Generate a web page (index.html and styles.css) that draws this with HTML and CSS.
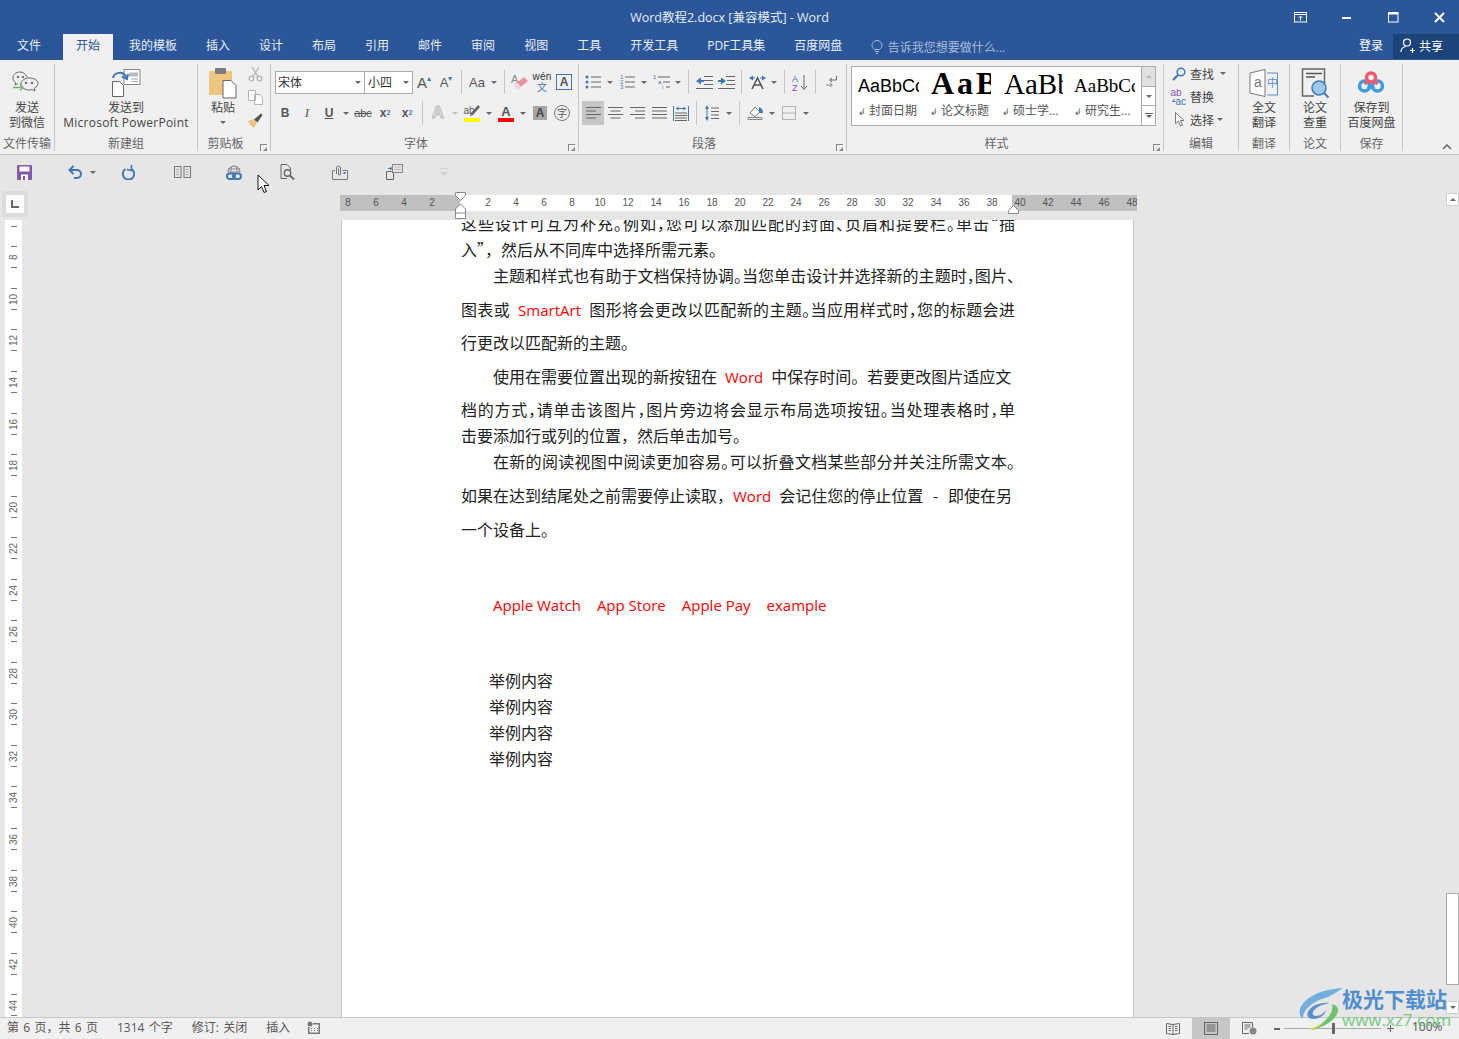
FILE: index.html
```html
<!DOCTYPE html>
<html lang="zh-CN">
<head>
    <meta charset="UTF-8">
    <title>Word教程2.docx [兼容模式] - Word</title>
    <link rel="stylesheet" href="styles.css">
</head>
<body>

    <!-- Title bar -->
    <header class="titlebar">
        <div></div>
        <div class="doc-title">Word教程2.docx [兼容模式] - Word</div>
        <div class="win-controls">
            <span class="win-btn"><svg width="14" height="11" viewBox="0 0 14 11" fill="none" stroke="#fff"><rect x=".5" y=".5" width="12" height="9.5"/><path d="M.5 2.5h12M6.5 8.5V4.5M4.5 6l2-2 2 2"/></svg></span>
            <span class="win-btn"><svg width="10" height="3" viewBox="0 0 10 3"><rect width="9" height="2" y="1" fill="#fff"/></svg></span>
            <span class="win-btn"><svg width="11" height="11" viewBox="0 0 11 11" fill="none" stroke="#fff"><rect x=".5" y=".5" width="9.5" height="9.5"/><path d="M0 1.5h10" stroke-width="2"/></svg></span>
            <span class="win-btn"><svg width="11" height="11" viewBox="0 0 11 11" stroke="#fff" stroke-width="2"><path d="M1 1l9 9M10 1l-9 9"/></svg></span>
        </div>
    </header>

    <!-- Tabs -->
    <nav class="tabs">
        <span class="tab tab-file">文件</span>
        <span class="tab tab-active">开始</span>
        <span class="tab">我的模板</span>
        <span class="tab">插入</span>
        <span class="tab">设计</span>
        <span class="tab">布局</span>
        <span class="tab">引用</span>
        <span class="tab">邮件</span>
        <span class="tab">审阅</span>
        <span class="tab">视图</span>
        <span class="tab">工具</span>
        <span class="tab">开发工具</span>
        <span class="tab">PDF工具集</span>
        <span class="tab">百度网盘</span>
        <span class="tell-me">
            <svg width="12" height="14" viewBox="0 0 12 14" fill="none" stroke="#a9bcd8"><path d="M3.5 9.5C2 8.500 1 7 1 5.500a5 5 0 0 1 10 0C11 7 10 8.500 8.500 9.500zM4 11.500h4M5 13.500h2"/></svg>
            告诉我您想要做什么...
        </span>
        <span class="login">登录</span>
        <span class="share">
            <svg width="15" height="15" viewBox="0 0 15 15" fill="none" stroke="#fff" stroke-width="1.200"><circle cx="7" cy="4.500" r="3.500"/><path d="M1 14c0-3 2-5 5-5.500M10 12.500h5M12.500 10v5"/></svg>
            共享
        </span>
    </nav>

    <!-- Ribbon -->
    <section class="ribbon">

        <div class="group g-wechat">
            <div class="group-body big-body">
                <div class="big">
                    <svg class="big-ic" width="30" height="30" viewBox="0 0 30 30" fill="none" stroke="#666"><path d="M15 9c-1-3-4-5-7-5-4 0-7 2.500-7 6 0 2 1 3.500 2.500 4.500L3 17l3-1.500"/><path d="M17 10c-4 0-8 2.500-8 6s4 6 8 6c1 0 2 0 3-.5l3 1.500-.5-3c2-1 3.500-2.500 3.500-4.500 0-3.500-4-5.500-9-5.500z"/><circle cx="6" cy="9" r=".8" fill="#666"/><circle cx="11" cy="9" r=".8" fill="#666"/><circle cx="14" cy="15" r=".8" fill="#666"/><circle cx="20" cy="15" r=".8" fill="#666"/><path d="M1 19.500h10M8 16.500l3 3-3 3" stroke="#6fb36f" stroke-width="1.300"/></svg>
                    <span>发送</span><span>到微信</span>
                </div>
            </div>
            <div class="group-label">文件传输</div>
        </div>

        <div class="group g-ppt">
            <div class="group-body big-body">
                <div class="big">
                    <svg class="big-ic" width="32" height="30" viewBox="0 0 32 30" fill="none"><rect x="14" y="1.500" width="16" height="15" fill="#fff" stroke="#888"/><path d="M19 4.500h9v4h-9z" fill="#bbb"/><path d="M21 11h7M21 13.500h7" stroke="#aaa"/><path d="M2.500 13.500h7l4 4v11h-11z" fill="#fff" stroke="#666"/><path d="M3 10c1-5 8-7 12-3l2 3" stroke="#3f78b5" stroke-width="2"/><path d="M12 8.500l5 2.500 1-5" stroke="#3f78b5" stroke-width="2"/></svg>
                    <span>发送到</span><span class="latin-label">Microsoft PowerPoint</span>
                </div>
            </div>
            <div class="group-label">新建组</div>
        </div>

        <div class="group g-clip">
            <div class="group-body clip-body">
                <div class="big paste">
                    <svg class="big-ic" width="30" height="32" viewBox="0 0 30 32"><rect x="1" y="4" width="23" height="24" rx="1" fill="#edc57e"/><rect x="7" y="1" width="11" height="6" rx="1" fill="#7a7a7a"/><path d="M15 13.500h8l5 5v12.500h-13z" fill="#fff" stroke="#666"/></svg>
                    <span>粘贴</span>
                    <i class="dd dd-big"></i>
                </div>
                <div class="clip-tools">
                    <svg width="15" height="16" viewBox="0 0 15 16" fill="none" stroke="#b5b5b5" stroke-width="1.300"><circle cx="3.500" cy="12.500" r="2.300"/><circle cx="11.500" cy="12.500" r="2.300"/><path d="M5 10.500L11 1M10 10.500L4 1"/></svg>
                    <svg width="15" height="15" viewBox="0 0 15 15" fill="#fff" stroke="#b5b5b5"><path d="M.5.5h7v10h-7zM6.500 4.500h5l3 3v7h-8z"/></svg>
                    <svg width="16" height="15" viewBox="0 0 16 15"><path d="M1 8l6-2 3 4-3 5c-2-1-5-4-6-7z" fill="#edc57e"/><path d="M7 6.500l7-6 1.500 1.500-5 7.500z" fill="#555"/></svg>
                </div>
            </div>
            <div class="group-label has-launcher">剪贴板<i class="launcher"></i></div>
        </div>

        <div class="group g-font">
            <div class="group-body rows">
                <div class="row">
                    <span class="combo combo-font">宋体<i class="dd"></i></span>
                    <span class="combo combo-size">小四<i class="dd"></i></span>
                    <span class="ic glyph">A<sup class="up">▴</sup></span>
                    <span class="ic glyph glyph-s">A<sup class="up">▾</sup></span>
                    <i class="sep"></i>
                    <span class="ic glyph glyph-aa">Aa</span><i class="dd"></i>
                    <i class="sep"></i>
                    <span class="ic"><svg width="18" height="17" viewBox="0 0 18 17"><path d="M7 15l10-8-4-4-10 8z" fill="#ee8f9b"/><path d="M3 11l4 4 3-2.500-4-4z" fill="#f8d5da"/><text x="0" y="9" font-size="11" fill="#888" font-family="Liberation Sans">A</text></svg></span>
                    <span class="ic wen"><em>wén</em><b>文</b></span>
                    <span class="ic"><span class="boxed-a">A</span></span>
                </div>
                <div class="row">
                    <span class="ic glyph-b">B</span>
                    <span class="ic glyph-i">I</span>
                    <span class="ic glyph-u">U</span><i class="dd"></i>
                    <span class="ic glyph-abc">abc</span>
                    <span class="ic glyph-x">x<sub>2</sub></span>
                    <span class="ic glyph-x">x<sup>2</sup></span>
                    <i class="sep"></i>
                    <span class="ic glyph-ghost">A</span><i class="dd dd-light"></i>
                    <span class="ic glyph-hl"><small>ab</small><svg class="hl-pen" width="10" height="12" viewBox="0 0 10 12"><path d="M1 8l7-8 2 2-7 8-3 1z" fill="#666"/></svg><u class="bar bar-yellow"></u></span><i class="dd"></i>
                    <span class="ic glyph-red">A<u class="bar bar-red"></u></span><i class="dd"></i>
                    <span class="ic"><span class="shade-a">A</span></span>
                    <span class="ic"><span class="circle-zi">字</span></span>
                </div>
            </div>
            <div class="group-label has-launcher">字体<i class="launcher"></i></div>
        </div>

        <div class="group g-para">
            <div class="group-body rows">
                <div class="row">
                    <span class="ic"><svg width="16" height="16" viewBox="0 0 16 16"><path d="M6 3h10M6 8h10M6 13h10" stroke="#666"/><g fill="#3f78b5"><circle cx="2" cy="3" r="1.500"/><circle cx="2" cy="8" r="1.500"/><circle cx="2" cy="13" r="1.500"/></g></svg></span><i class="dd"></i>
                    <span class="ic"><svg width="16" height="16" viewBox="0 0 16 16" font-size="6" fill="#3f78b5" font-family="Liberation Sans"><path d="M6 3h10M6 8h10M6 13h10" stroke="#666"/><text x="1" y="5">1</text><text x="1" y="10">2</text><text x="1" y="15">3</text></svg></span><i class="dd"></i>
                    <span class="ic"><svg width="17" height="16" viewBox="0 0 17 16" font-size="6" fill="#3f78b5" font-family="Liberation Sans"><path d="M5 3h12M10 8h7M13 13h4" stroke="#666"/><text x="0" y="5">1</text><text x="5" y="10">a</text><text x="9" y="15">i</text></svg></span><i class="dd"></i>
                    <i class="sep"></i>
                    <span class="ic"><svg width="17" height="13" viewBox="0 0 17 13"><path d="M8 .5h9M8 4.500h9M8 8.500h9M0 12.500h17" stroke="#666"/><path d="M0 5l5-3.500V4h3v2H5v2.500z" fill="#3f78b5"/></svg></span>
                    <span class="ic"><svg width="17" height="13" viewBox="0 0 17 13"><path d="M8 .5h9M9 4.500h8M8 8.500h9M0 12.500h17" stroke="#666"/><path d="M8 5L3 1.500V4H0v2h3v2.500z" fill="#3f78b5"/></svg></span>
                    <i class="sep"></i>
                    <span class="ic"><svg width="17" height="14" viewBox="0 0 17 14" fill="none"><path d="M0 3l4-2.500v5zM17 3l-4-2.500v5z" fill="#3f78b5"/><path d="M4 3h2M11 3h2" stroke="#3f78b5"/><path d="M3 14L8.500 3 14 14M5 10h7" stroke="#555" stroke-width="1.600"/></svg></span><i class="dd"></i>
                    <i class="sep"></i>
                    <span class="ic"><svg width="16" height="17" viewBox="0 0 16 17" font-size="9" font-family="Liberation Sans"><text x="0" y="8" fill="#3f78b5">A</text><text x="0" y="17" fill="#8a52b0">Z</text><path d="M12 1v14M9 12l3 3.500 3-3.500" fill="none" stroke="#666"/></svg></span>
                    <i class="sep"></i>
                    <span class="ic"><svg width="11" height="14" viewBox="0 0 11 14" fill="none" stroke="#666"><path d="M10.500 1v4H4M6 3L3.500 5 6 7"/><path d="M0 10h6M4 8l2.500 2L4 12" stroke="#888"/></svg></span>
                </div>
                <div class="row">
                    <span class="ic ic-on"><svg width="15" height="12" viewBox="0 0 15 12" stroke="#666"><path d="M0 .5h15M0 4h10M0 7.500h15M0 11h10"/></svg></span>
                    <span class="ic"><svg width="15" height="12" viewBox="0 0 15 12" stroke="#666"><path d="M0 .5h15M2.500 4h10M0 7.500h15M2.500 11h10"/></svg></span>
                    <span class="ic"><svg width="15" height="12" viewBox="0 0 15 12" stroke="#666"><path d="M0 .5h15M5 4h10M0 7.500h15M5 11h10"/></svg></span>
                    <span class="ic"><svg width="15" height="12" viewBox="0 0 15 12" stroke="#666"><path d="M0 .5h15M0 4h15M0 7.500h15M0 11h15"/></svg></span>
                    <span class="ic"><svg width="16" height="15" viewBox="0 0 16 15" fill="none"><path d="M.5 0v15M15.500 0v15M3 2.500h10" stroke="#3f78b5"/><path d="M3 2.500l2.500-2v4zM13 2.500l-2.500-2v4z" fill="#3f78b5"/><path d="M2 7h12M2 9.500h12M2 12h12M2 14.500h12" stroke="#666"/></svg></span>
                    <i class="sep"></i>
                    <span class="ic"><svg width="14" height="16" viewBox="0 0 14 16" fill="none"><path d="M6 3h8M6 6.500h8M6 10h8M6 13.500h8" stroke="#666"/><path d="M2 2v12" stroke="#3f78b5"/><path d="M0 4l2-4 2 4zM0 12l2 4 2-4z" fill="#3f78b5"/></svg></span><i class="dd"></i>
                    <i class="sep"></i>
                    <span class="ic"><svg width="17" height="16" viewBox="0 0 17 16" fill="none"><path d="M1 14.500h14v-2H1z" stroke="#888"/><path d="M3 8l5-6 5 5-5 4.500z" fill="#fff" stroke="#777"/><path d="M12 2c3 1 4 3 4 6h-4z" fill="#3f78b5"/></svg></span><i class="dd"></i>
                    <span class="ic"><svg width="14" height="14" viewBox="0 0 14 14" fill="none" stroke="#777" stroke-dasharray="1 1"><rect x=".5" y=".5" width="13" height="13"/><path d="M.5 7h13"/></svg></span><i class="dd"></i>
                </div>
            </div>
            <div class="group-label has-launcher">段落<i class="launcher"></i></div>
        </div>

        <div class="group g-style">
            <div class="group-body gallery-body">
                <div class="gallery">
                    <div class="style-item"><div class="sample sample-1">AaBbCc</div><div class="style-name"><i>↲</i> 封面日期</div></div>
                    <div class="style-item"><div class="sample sample-2">AaB</div><div class="style-name"><i>↲</i> 论文标题</div></div>
                    <div class="style-item"><div class="sample sample-3">AaBb</div><div class="style-name"><i>↲</i> 硕士学...</div></div>
                    <div class="style-item"><div class="sample sample-4">AaBbCc</div><div class="style-name"><i>↲</i> 研究生...</div></div>
                </div>
                <div class="gallery-scroll">
                    <span class="gs-off"><i class="dd dd-up"></i></span>
                    <span><i class="dd"></i></span>
                    <span class="gs-more"><i class="dd"></i></span>
                </div>
            </div>
            <div class="group-label has-launcher">样式<i class="launcher"></i></div>
        </div>

        <div class="group g-edit">
            <div class="group-body edit-body">
                <div class="edit-row">
                    <svg width="14" height="14" viewBox="0 0 14 14" fill="none" stroke="#3f78b5" stroke-width="1.500"><circle cx="9" cy="5" r="3.800"/><path d="M6 8l-5 5" stroke-width="2.200"/></svg>
                    <span>查找</span><i class="dd dd-edit"></i>
                </div>
                <div class="edit-row">
                    <svg width="17" height="16" viewBox="0 0 17 16" font-size="10" font-family="Liberation Sans" fill="#8a52b0"><text x="0" y="7">ab</text><text x="5" y="16" fill="#3f78b5">ac</text><path d="M4 10l-2 2.500h3" fill="none" stroke="#3f78b5"/></svg>
                    <span>替换</span>
                </div>
                <div class="edit-row">
                    <svg width="14" height="15" viewBox="0 0 14 15" fill="#fff" stroke="#777"><path d="M3.500.5v11l3-2.500 2 5 2-1-2-4.500h3.500z"/></svg>
                    <span>选择</span><i class="dd"></i>
                </div>
            </div>
            <div class="group-label">编辑</div>
        </div>

        <div class="group g-trans">
            <div class="group-body big-body">
                <div class="big">
                    <svg class="big-ic" width="30" height="30" viewBox="0 0 30 30" fill="none"><path d="M1 5l15-3.500v27L1 25z" fill="#fff" stroke="#777"/><text x="5" y="19" font-size="14" font-family="Liberation Sans" fill="#777">a</text><path d="M18 5h10.500v22H18" stroke="#5b8ccb"/><text x="18" y="19" font-size="11" fill="#5b8ccb" font-family="Noto Sans CJK SC">中</text></svg>
                    <span>全文</span><span>翻译</span>
                </div>
            </div>
            <div class="group-label">翻译</div>
        </div>

        <div class="group g-paper">
            <div class="group-body big-body">
                <div class="big">
                    <svg class="big-ic" width="30" height="32" viewBox="0 0 30 32" fill="none"><path d="M14 29H2.500V2h22v14" stroke="#666" stroke-width="1.500"/><path d="M6 6.500h16" stroke="#555" stroke-width="1.500"/><path d="M6 10h9" stroke="#555" stroke-width="1.500"/><circle cx="19" cy="21" r="7" fill="#9ccbf0" stroke="#3f78b5" stroke-width="1.500"/><path d="M24 26l4.500 4.500" stroke="#3f78b5" stroke-width="2"/></svg>
                    <span>论文</span><span>查重</span>
                </div>
            </div>
            <div class="group-label">论文</div>
        </div>

        <div class="group g-save">
            <div class="group-body big-body">
                <div class="big">
                    <svg class="big-ic" width="28" height="28" viewBox="0 0 28 28" fill="none" stroke-width="3.500"><circle cx="7.500" cy="17" r="5" stroke="#3f9be0"/><circle cx="20.500" cy="17" r="5" stroke="#3f9be0"/><path d="M11 20l3-3 3 3" stroke="#3f9be0"/><circle cx="14" cy="8.500" r="4.500" stroke="#ef5a6f"/><path d="M10.500 12l-3 3M17.500 12l3 3" stroke="#ef5a6f"/></svg>
                    <span>保存到</span><span>百度网盘</span>
                </div>
            </div>
            <div class="group-label">保存</div>
        </div>

        <div class="collapse"><svg width="10" height="6" viewBox="0 0 10 6" fill="none" stroke="#666" stroke-width="1.500"><path d="M1 5l4-4 4 4"/></svg></div>
    </section>

    <!-- Quick access toolbar -->
    <div class="qat">
        <span class="qa qa-save"><svg width="15" height="15" viewBox="0 0 15 15"><rect width="15" height="15" rx="1" fill="#8659a8"/><rect x="2.500" y="1.500" width="10" height="5" fill="#fff"/><rect x="4" y="9.500" width="7" height="5.500" fill="#fff"/><rect x="6" y="11" width="2" height="4" fill="#8659a8"/></svg></span>
        <span class="qa qa-undo"><svg width="15" height="14" viewBox="0 0 15 14" fill="none" stroke="#3f78b5" stroke-width="2"><path d="M2 5h7a4 4 0 0 1 0 8H6"/><path d="M5.500 1L1.500 5l4 4"/></svg><i class="dd"></i></span>
        <span class="qa qa-redo"><svg width="14" height="15" viewBox="0 0 14 15" fill="none" stroke="#3f78b5" stroke-width="2"><path d="M4.500 4a5.700 5.700 0 1 0 6 0"/><path d="M10.500 0v5.500L6 4.500" stroke-width="1.600"/></svg></span>
        <span class="qa qa-book"><svg width="17" height="12" viewBox="0 0 17 12" fill="none" stroke="#777"><rect x=".5" y=".5" width="6.500" height="11"/><rect x="10" y=".5" width="6.500" height="11"/><path d="M2 3.500h3M2 6h3M2 8.500h3M11.500 3.500h3M11.500 6h3M11.500 8.500h3" stroke="#aaa"/></svg></span>
        <span class="qa qa-link"><svg width="16" height="16" viewBox="0 0 16 16" fill="none"><path d="M2 8a6 6 0 0 1 12 0" stroke="#777"/><path d="M2 5h12M2 8h12M6 2.500C5 4 5 6 5 8M10 2.500c1 1.500 1 3.500 1 5.500" stroke="#888"/><rect x="1" y="9.500" width="8" height="5.500" rx="2.700" stroke="#3f78b5" stroke-width="2"/><rect x="7" y="9.500" width="8" height="5.500" rx="2.700" stroke="#3f78b5" stroke-width="2"/></svg></span>
        <span class="qa qa-find"><svg width="15" height="16" viewBox="0 0 15 16" fill="none" stroke="#666"><path d="M7 14.500H1V.5h6l3.500 3.500v2"/><circle cx="7.500" cy="9" r="3.200" stroke-width="1.400"/><path d="M10 11.500l4 4" stroke-width="1.800"/></svg></span>
        <span class="qa qa-clip"><svg width="16" height="15" viewBox="0 0 16 15" fill="none" stroke="#777"><path d="M3 5.500H.5v9h15v-9h-5"/><path d="M4.500 9V3a2 2 0 0 1 4 0v6a1 1 0 0 1-2 0V3.500"/><rect x="11.500" y="7" width="2" height="2" fill="#3f78b5" stroke="none"/></svg></span>
        <span class="qa qa-doc"><svg width="17" height="16" viewBox="0 0 17 16" fill="none"><rect x="6.500" y=".5" width="10" height="8" stroke="#888"/><path d="M8 3h7M8 5.500h7" stroke="#bbb"/><path d="M.5 7.500h5l2 2v6h-7z" stroke="#666" fill="#e6e6e6"/><path d="M2 4.500h3M4 3l2 1.500L4 6" stroke="#3f78b5"/></svg></span>
        <span class="qa qa-faint"><svg width="8" height="8" viewBox="0 0 8 8" fill="#d2d2d2"><rect width="8" height="1"/><path d="M0 4h8L4 8z"/></svg></span>
        <svg class="cursor" width="15" height="21" viewBox="0 0 15 21"><path d="M1 1v15l3.500-3.500 2.500 6 2.500-1-2.500-6H12z" fill="#fff" stroke="#111"/></svg>
    </div>

    <!-- Document area -->
    <main class="work">
        <div class="left-rail">
            <div class="corner"><span class="corner-l"></span></div>
            <div class="vruler">
                <div class="vr-item"><i></i><span>6</span><i></i></div>
                <div class="vr-item"><i></i><span>8</span><i></i></div>
                <div class="vr-item"><i></i><span>10</span><i></i></div>
                <div class="vr-item"><i></i><span>12</span><i></i></div>
                <div class="vr-item"><i></i><span>14</span><i></i></div>
                <div class="vr-item"><i></i><span>16</span><i></i></div>
                <div class="vr-item"><i></i><span>18</span><i></i></div>
                <div class="vr-item"><i></i><span>20</span><i></i></div>
                <div class="vr-item"><i></i><span>22</span><i></i></div>
                <div class="vr-item"><i></i><span>24</span><i></i></div>
                <div class="vr-item"><i></i><span>26</span><i></i></div>
                <div class="vr-item"><i></i><span>28</span><i></i></div>
                <div class="vr-item"><i></i><span>30</span><i></i></div>
                <div class="vr-item"><i></i><span>32</span><i></i></div>
                <div class="vr-item"><i></i><span>34</span><i></i></div>
                <div class="vr-item"><i></i><span>36</span><i></i></div>
                <div class="vr-item"><i></i><span>38</span><i></i></div>
                <div class="vr-item"><i></i><span>40</span><i></i></div>
                <div class="vr-item"><i></i><span>42</span><i></i></div>
                <div class="vr-item"><i></i><span>44</span><i></i></div>
            </div>
        </div>

        <div class="doc-col">
            <div class="hruler">
                <div class="hr-part hr-margin hr-left"><span>8</span><span>6</span><span>4</span><span>2</span></div>
                <div class="hr-part hr-text"><span>2</span><span>4</span><span>6</span><span>8</span><span>10</span><span>12</span><span>14</span><span>16</span><span>18</span><span>20</span><span>22</span><span>24</span><span>26</span><span>28</span><span>30</span><span>32</span><span>34</span><span>36</span><span>38</span></div>
                <div class="hr-part hr-margin hr-right"><span>40</span><span>42</span><span>44</span><span>46</span><span>48</span></div>
                <svg class="indent-left" width="11" height="27" viewBox="0 0 11 27" fill="#fff" stroke="#888"><path d="M.5.5h10v3l-5 5-5-5zM5.500 12l5 5v9.500H.5V17zM.5 21h10"/></svg>
                <svg class="indent-right" width="11" height="9" viewBox="0 0 11 9" fill="#fff" stroke="#888"><path d="M5.500.5l5 5v3H.5v-3z"/></svg>
            </div>
            <article class="page">
                <p class="ln first full halt">这些设计可互为补充。例如，您可以添加匹配的封面、页眉和提要栏。单击“插</p>
                <p class="ln">入”，然后从不同库中选择所需元素。</p>
                <p class="ln full halt ind">主题和样式也有助于文档保持协调。当您单击设计并选择新的主题时，图片、</p>
                <p class="ln ln-tall full halt">图表或<span class="red">SmartArt</span>图形将会更改以匹配新的主题。当应用样式时，您的标题会进</p>
                <p class="ln ln-tall">行更改以匹配新的主题。</p>
                <p class="ln ln-tall ind">使用在需要位置出现的新按钮在<span class="red">Word</span>中保存时间。若要更改图片适应文</p>
                <p class="ln ln-tall full halt">档的方式，请单击该图片，图片旁边将会显示布局选项按钮。当处理表格时，单</p>
                <p class="ln">击要添加行或列的位置，然后单击加号。</p>
                <p class="ln full halt ind">在新的阅读视图中阅读更加容易。可以折叠文档某些部分并关注所需文本。</p>
                <p class="ln ln-tall">如果在达到结尾处之前需要停止读取，<span class="red red-tight">Word</span>会记住您的停止位置 <span class="dash">-</span> 即使在另</p>
                <p class="ln ln-tall">一个设备上。</p>
                <p class="ln apple"><span class="red">Apple Watch</span><span class="red">App Store</span><span class="red">Apple Pay</span><span class="red">example</span></p>
                <p class="ln ex first-ex">举例内容</p>
                <p class="ln ex">举例内容</p>
                <p class="ln ex">举例内容</p>
                <p class="ln ex">举例内容</p>
            </article>
        </div>

        <aside class="vscroll">
            <span class="vs-btn"><i class="dd dd-up"></i></span>
            <span class="vs-track"></span>
            <span class="vs-thumb"></span>
            <span class="vs-gap"></span>
            <span class="vs-btn"><i class="dd"></i></span>
        </aside>
    </main>

    <!-- Status bar -->
    <footer class="status">
        <span>第 6 页，共 6 页</span>
        <span>1314 个字</span>
        <span>修订: 关闭</span>
        <span>插入</span>
        <svg width="13" height="13" viewBox="0 0 13 13" fill="#777"><circle cx="3" cy="3" r="2.500"/><path d="M6 2h7v11H1V6h1.500v5.500h9V3.500H6z"/><path d="M4 7h1v1H4zM7 7h1v1H7zM10 7h1v1h-1zM4 9h1v1H4zM7 9h1v1H7zM10 9h1v1h-1z"/></svg>
        <div class="status-right">
            <span class="view"><svg width="14" height="13" viewBox="0 0 14 13" fill="none" stroke="#666"><path d="M.5 1.500L7 2.500l6.500-1v10L7 12.500l-6.500-1zM7 2.500v10M2.500 4.500H5M2.500 6.500H5M2.500 8.500H5M9 4.500h2.500M9 6.500h2.500M9 8.500h2.500"/></svg></span>
            <span class="view view-on"><svg width="14" height="13" viewBox="0 0 14 13" fill="none" stroke="#666"><rect x=".5" y=".5" width="13" height="12"/><path d="M2.500 3h9M2.500 5h9M2.500 7h9M2.500 9h9"/></svg></span>
            <span class="view"><svg width="15" height="13" viewBox="0 0 15 13" fill="none" stroke="#666"><path d="M7 11.500H.5V.5h10v5M2.500 3h6M2.500 5h6M2.500 7h3"/><circle cx="11" cy="9" r="3.500" fill="#888" stroke="none"/></svg></span>
            <div class="zoom-ctl">
                <span class="z-minus"></span>
                <span class="z-track"><i class="z-thumb"></i></span>
                <span class="z-plus"></span>
                <span class="z-val">100%</span>
            </div>
        </div>
    </footer>

    <!-- Watermark lies over the status bar -->
    <div class="watermark">
        <svg width="46" height="44" viewBox="0 0 46 44" fill="none"><path d="M44 1C24 2 6 9 1 22c-1 4 0 8 3 10-1-8 8-17 22-21 6-2 12-6 18-10z" fill="#5aa4dc" opacity=".85"/><path d="M31 16c-8-1-19 2-22 9-2 4 1 7 5 7 7 0 12-4 13-9-2 3-6 6-10 6-3 0-4-2-3-4 2-5 10-8 17-9z" fill="#5b8fc9"/><path d="M33 17c2 8-4 17-21 26 14-3 25-10 27-19 1-3-2-6-6-7z" fill="#6cc36a"/><path d="M12 43c5-2 9-4 12-7-4 2-8 4-13 5z" fill="#e5dc58"/></svg>
        <div class="wm-text">
            <div class="wm-name">极光下载站</div>
            <div class="wm-url">www.xz7.com</div>
        </div>
    </div>

</body>
</html>
```

FILE: styles.css
```css
/* Basic reset */
* {
    margin: 0;
    padding: 0;
    box-sizing: border-box;
}

html, body {
    height: 100%;
    overflow: hidden;
}

body {
    display: flex;
    flex-direction: column;
    font-family: "Open Sans", "Noto Sans CJK SC", sans-serif;
    font-size: 12px;
    color: #444;
    background-color: #e6e6e6;
    position: relative;
}

i, em, u {
    font-style: normal;
    text-decoration: none;
}

/* Small dropdown triangle */
.dd {
    display: inline-flex;
    justify-content: center;
    align-items: center;
    width: 12px;
    height: 10px;
    flex: none;
}
.dd::after {
    content: "";
    border-left: 3px solid transparent;
    border-right: 3px solid transparent;
    border-top: 3px solid #666;
}
.dd-up::after {
    border-top: 0;
    border-bottom: 3px solid #666;
}
.dd-light::after {
    border-top-color: #c0c0c0;
}

/* Title bar */
.titlebar {
    height: 34px;
    background-color: #2b579a;
    display: grid;
    grid-template-columns: 1fr auto 1fr;
    align-items: center;
    flex: none;
}
.doc-title {
    color: #e6ecf5;
    font-size: 12.5px;
    padding-bottom: 2px;
}
.win-controls {
    display: flex;
    justify-content: flex-end;
    margin-right: -3px;
}
.win-btn {
    width: 46px;
    height: 34px;
    display: flex;
    align-items: center;
    justify-content: center;
}

/* Tabs */
.tabs {
    height: 26px;
    background-color: #2b579a;
    display: flex;
    align-items: stretch;
    flex: none;
    color: #e9eef6;
}
.tab {
    padding: 0 14.5px;
    line-height: 24px;
    white-space: nowrap;
}
.tab-file {
    width: 58px;
    margin-right: 3.5px;
    text-align: center;
    padding: 0;
}
.tab-active {
    background-color: #f0f0f0;
    color: #2b579a;
    padding: 0 13px;
    margin: 0 1.5px;
}
.tell-me {
    display: flex;
    align-items: center;
    gap: 5px;
    margin-left: 14px;
    color: #a9bcd8;
    height: 26px;
}
.login {
    margin-left: auto;
    line-height: 24px;
    color: #fff;
}
.share {
    width: 66px;
    margin-left: 10px;
    height: 25px;
    background-color: #1b4479;
    color: #fff;
    display: flex;
    align-items: center;
    gap: 4px;
    padding: 0 0 2px 7px;
}

/* Ribbon */
.ribbon {
    height: 95px;
    background-color: #f0f0f0;
    border-bottom: 1px solid #c6c6c6;
    display: flex;
    padding: 4px 0 3px;
    flex: none;
    position: relative;
}
.group {
    display: flex;
    flex-direction: column;
    border-right: 1px solid #c6c6c6;
    flex: none;
}
.g-wechat { width: 55px; }
.g-ppt    { width: 143px; }
.g-clip   { width: 73px; }
.g-font   { width: 308px; }
.g-para   { width: 268px; }
.g-style  { width: 317px; }
.g-edit   { width: 75px; }
.g-trans  { width: 51px; }
.g-paper  { width: 51px; }
.g-save   { width: 62px; }

.group-body {
    flex: 1;
    min-height: 0;
}
.group-label {
    height: 16px;
    line-height: 18px;
    text-align: center;
    color: #666;
    position: relative;
    white-space: nowrap;
}
.has-launcher {
    padding-right: 17px;
}
.launcher {
    position: absolute;
    right: 3px;
    bottom: 0;
    width: 7px;
    height: 7px;
    border-left: 1px solid #888;
    border-top: 1px solid #888;
}
.launcher::after {
    content: "";
    position: absolute;
    right: 0;
    bottom: 0;
    border-left: 4px solid transparent;
    border-bottom: 4px solid #888;
}

/* Large buttons */
.big-body {
    display: flex;
    justify-content: center;
    padding-top: 2px;
}
.big {
    display: flex;
    flex-direction: column;
    align-items: center;
    line-height: 15px;
    white-space: nowrap;
    color: #444;
}
.big-ic {
    height: 34px;
    margin-bottom: 0;
    flex: none;
}
.latin-label {
    font-size: 12px;
    letter-spacing: .25px;
}

/* Clipboard */
.clip-body {
    display: flex;
    padding-top: 2px;
}
.paste {
    width: 50px;
}
.dd-big {
    height: 14px;
}
.clip-tools {
    display: flex;
    flex-direction: column;
    align-items: center;
    gap: 8px;
    padding-top: 0;
    width: 14px;
}

/* Two row groups */
.rows {
    display: flex;
    flex-direction: column;
    gap: 3px;
    padding: 4px 0 0 3px;
}
.row {
    display: flex;
    align-items: center;
    height: 28px;
}
.ic {
    width: 22px;
    height: 24px;
    display: flex;
    align-items: center;
    justify-content: center;
    flex: none;
    position: relative;
}
.ic-on {
    background-color: #c6c6c6;
}
.sep {
    width: 1px;
    height: 24px;
    background-color: #c6c6c6;
    margin: 0 4px;
    flex: none;
}
.combo {
    height: 23px;
    border: 1px solid #ababab;
    background-color: #fff;
    display: flex;
    align-items: center;
    justify-content: space-between;
    padding-left: 2px;
    color: #333;
    flex: none;
}
.combo-font {
    width: 90px;
    margin-left: 1px;
}
.combo-size {
    width: 48px;
    border-left: 0;
    padding-left: 3px;
}

/* Text made into toolbar glyphs */
.glyph {
    font-size: 15px;
    color: #555;
    font-family: "Liberation Sans", sans-serif;
}
.glyph-s {
    font-size: 13px;
}
.up {
    font-size: 8px;
    color: #3f78b5;
    margin-bottom: 8px;
}
.glyph-aa {
    font-size: 13px;
}
.wen {
    flex-direction: column;
    line-height: 10px;
    color: #333;
}
.wen em {
    font: 10px/10px "Liberation Sans", sans-serif;
    letter-spacing: .3px;
}
.wen b {
    font-size: 10px;
    font-weight: normal;
    color: #3f78b5;
}
.boxed-a {
    width: 16px;
    height: 16px;
    border: 1px solid #3f78b5;
    font: bold 12px/14px "Liberation Sans", sans-serif;
    color: #555;
    text-align: center;
}
.glyph-b, .glyph-i, .glyph-u, .glyph-abc, .glyph-x {
    font-family: "Liberation Sans", sans-serif;
    font-weight: bold;
    font-size: 12px;
    color: #555;
}
.glyph-i {
    font-family: "Liberation Serif", serif;
    font-style: italic;
    font-weight: normal;
    font-size: 13px;
}
.glyph-u {
    text-decoration: underline;
}
.glyph-abc {
    font-weight: normal;
    font-size: 11px;
    text-decoration: line-through;
}
.glyph-x sub, .glyph-x sup {
    font-size: 7px;
    color: #3f78b5;
    line-height: 0;
}
.glyph-ghost {
    font: bold 17px "Liberation Sans", sans-serif;
    color: #e2e2e2;
    -webkit-text-stroke: 1px #bdbdbd;
}
.glyph-hl small {
    font: 10px "Liberation Sans", sans-serif;
    color: #555;
    margin: 0 6px 5px 0;
}
.hl-pen {
    position: absolute;
    right: 3px;
    top: 4px;
}
.glyph-red {
    font: bold 13px "Liberation Sans", sans-serif;
    color: #555;
    padding-bottom: 4px;
}
.bar {
    position: absolute;
    left: 3px;
    bottom: 3px;
    width: 16px;
    height: 4px;
}
.bar-yellow { background-color: #ffff00; }
.bar-red { background-color: #ff0000; }
.shade-a {
    width: 14px;
    height: 14px;
    background-color: #a6a6a6;
    font: bold 12px/14px "Liberation Sans", sans-serif;
    color: #444;
    text-align: center;
}
.circle-zi {
    width: 16px;
    height: 16px;
    border: 1px solid #777;
    border-radius: 50%;
    font-size: 10px;
    line-height: 14px;
    text-align: center;
    color: #555;
}

/* Style gallery */
.gallery-body {
    display: flex;
    padding: 2px 0 0 4px;
}
.gallery {
    width: 291px;
    height: 60px;
    background-color: #fff;
    border: 1px solid #ababab;
    display: flex;
    overflow: hidden;
}
.style-item {
    width: 72px;
    padding: 0 5px 0 6px;
    flex: none;
}
.sample {
    height: 34px;
    line-height: 38px;
    overflow: hidden;
    white-space: nowrap;
    color: #000;
    font-family: "Liberation Serif", serif;
}
.sample-1 { font: 18px/38px "Liberation Sans", sans-serif; }
.sample-2 { font-size: 32px; font-weight: bold; line-height: 32px; margin-left: 1px; letter-spacing: 3px; }
.sample-3 { font-size: 29px; line-height: 34px; margin-left: 2px; }
.sample-4 { font-size: 19px; }
.style-name {
    color: #555;
    white-space: nowrap;
    line-height: 20px;
}
.style-name i {
    font-size: 9px;
}
.gallery-scroll {
    width: 14px;
    height: 60px;
    display: flex;
    flex-direction: column;
    border: 1px solid #ababab;
    border-left: 0;
    background-color: #fff;
}
.gallery-scroll span {
    flex: 1;
    display: flex;
    align-items: center;
    justify-content: center;
    border-bottom: 1px solid #ababab;
}
.gallery-scroll span:last-child {
    border-bottom: 0;
}
.gs-off {
    background-color: #e0e0e0;
}
.gs-off .dd::after {
    border-bottom-color: #bbb;
}
.gs-more .dd {
    border-top: 1px solid #666;
    width: 8px;
    height: 5px;
}

/* Editing group */
.edit-body {
    display: flex;
    flex-direction: column;
    margin-top: -2px;
    padding-left: 6px;
}
.edit-row {
    height: 23px;
    display: flex;
    align-items: center;
    position: relative;
}
.edit-row svg {
    width: 18px;
    flex: none;
    margin-right: 2px;
}
.dd-edit {
    margin-left: 3px;
}

.collapse {
    position: absolute;
    right: 7px;
    bottom: 4px;
    display: flex;
}

/* Quick access toolbar */
.qat {
    height: 37px;
    display: flex;
    align-items: center;
    padding: 0 0 3px 17px;
    flex: none;
    position: relative;
}
.qa {
    display: flex;
    align-items: center;
    flex: none;
}
.qa-save  { width: 51px; }
.qa-undo  { width: 53px; }
.qa-undo .dd { margin-left: 4px; }
.qa-redo  { width: 53px; }
.qa-book  { width: 52px; }
.qa-link  { width: 54px; }
.qa-find  { width: 52px; }
.qa-clip  { width: 54px; }
.qa-doc   { width: 54px; }
.cursor {
    position: absolute;
    left: 257px;
    top: 19px;
}

/* Work area */
.work {
    flex: 1;
    min-height: 0;
    display: flex;
}
.left-rail {
    width: 340px;
    flex: none;
    padding-left: 5px;
    display: flex;
    flex-direction: column;
}
.corner {
    width: 20px;
    height: 20px;
    margin-top: 2px;
    margin-bottom: 6px;
    background-color: #fbfbfb;
    outline: 4px solid #dcdcdc;
    outline-offset: -1px;
    display: flex;
    align-items: center;
    justify-content: center;
    flex: none;
}
.corner-l {
    width: 8px;
    height: 8px;
    border-left: 2px solid #666;
    border-bottom: 2px solid #666;
}
.vruler {
    width: 17px;
    flex: 1;
    background-color: #fff;
    overflow: hidden;
    min-height: 0;
}
.vr-item {
    height: 41.55px;
    display: flex;
    flex-direction: column;
    align-items: center;
    justify-content: center;
    gap: 2px;
    color: #666;
}
.vr-item:first-child {
    margin-top: -25px;
}
.vr-item i {
    width: 6px;
    height: 1px;
    background-color: #777;
}
.vr-item span {
    writing-mode: vertical-rl;
    transform: rotate(180deg);
    font: 10px/10px "Liberation Sans", sans-serif;
    height: 16px;
    text-align: center;
}

.doc-col {
    width: 797px;
    flex: none;
    display: flex;
    flex-direction: column;
    min-height: 0;
}
.hruler {
    display: flex;
    height: 16px;
    margin-top: 3px;
    flex: none;
    position: relative;
    font: 10px/16px "Liberation Sans", sans-serif;
    color: #555;
}
.hr-part {
    display: flex;
    overflow: hidden;
    flex: none;
}
.hr-part span {
    width: 28px;
    text-align: center;
    flex: none;
}
.hr-margin {
    background-color: #c0c0c0;
}
.hr-left {
    width: 120px;
}
.hr-left span:first-child,
.hr-right span:first-child {
    margin-left: -6px;
}
.hr-text {
    width: 552px;
    background-color: #fff;
    padding-left: 14px;
}
.hr-right {
    width: 125px;
}
.indent-left {
    position: absolute;
    left: 115px;
    top: -3px;
}
.indent-right {
    position: absolute;
    left: 668px;
    top: 10px;
}

/* Page */
.page {
    flex: 1;
    min-height: 0;
    width: 793px;
    margin: 9px 0 0 1px;
    background-color: #fff;
    border-left: 1px solid #c6c6c6;
    border-right: 1px solid #c6c6c6;
    padding: 0 118px 0 119px;
    overflow: hidden;
    font-family: "Noto Sans CJK SC", sans-serif;
    font-size: 16px;
    color: #222;
}
.ln {
    white-space: nowrap;
    height: 26px;
    line-height: 26px;
}
.ln-tall {
    height: 33.6px;
    padding-top: 7.6px;
}
.first {
    margin-top: -10px;
}
.full {
    white-space: normal;
    text-align: justify;
    text-align-last: justify;
}
/* punctuation is squeezed on the lines that would not fit otherwise */
.halt {
    font-feature-settings: "halt";
}
.ind {
    text-indent: 32px;
}
.red {
    color: #f00;
    font-family: "Open Sans", "Noto Sans CJK SC", sans-serif;
    font-size: 15px;
    margin: 0 8px;
}
.red-tight {
    margin-left: 0;
}
.dash {
    margin: 0 6px;
}
.apple {
    display: flex;
    gap: 16px;
    padding-left: 32px;
    margin-top: 50px;
}
.apple .red {
    margin: 0;
}
.ex {
    padding-left: 28px;
}
.first-ex {
    margin-top: 49px;
}

/* Right scrollbar */
.vscroll {
    width: 13px;
    margin-left: auto;
    display: flex;
    flex-direction: column;
    flex: none;
    padding: 1px 0 3px;
}
.vs-btn {
    height: 13px;
    background-color: #fff;
    display: flex;
    align-items: center;
    justify-content: center;
    flex: none;
    border: 1px solid #cfcfcf;
}
.vs-track {
    flex: 1;
}
.vs-thumb {
    height: 92px;
    background-color: #fff;
    border: 1px solid #ababab;
    flex: none;
}
.vs-gap {
    height: 16px;
    flex: none;
}

/* Status bar */
.status {
    height: 22px;
    flex: none;
    background-color: #f0f0f0;
    border-top: 1px solid #c6c6c6;
    display: flex;
    align-items: center;
    gap: 19px;
    padding-left: 7px;
    color: #555;
    word-spacing: 1.2px;
}
.status > span {
    padding-bottom: 4px;
}
.status > svg {
    margin-bottom: 2px;
    margin-left: -2px;
}
.status-right {
    margin-left: auto;
    display: flex;
    align-items: center;
    height: 100%;
}
.view {
    width: 38px;
    height: 100%;
    display: flex;
    align-items: center;
    justify-content: center;
}
.view-on {
    background-color: #c6c6c6;
}
.zoom-ctl {
    display: flex;
    align-items: center;
    width: 191px;
    padding-left: 3px;
}
.z-minus {
    width: 6px;
    height: 2px;
    background-color: #666;
    margin-left: 3px;
}
.z-track {
    width: 97px;
    height: 1px;
    margin: 0 6px 0 4px;
    background-color: #aaa;
    position: relative;
}
.z-thumb {
    position: absolute;
    left: 48px;
    top: -5px;
    width: 3px;
    height: 11px;
    background-color: #666;
}
.z-plus {
    width: 7px;
    height: 7px;
    background:
        linear-gradient(#666, #666) center / 7px 1px no-repeat,
        linear-gradient(#666, #666) center / 1px 7px no-repeat;
}
.z-val {
    margin-left: 18px;
    padding-bottom: 4px;
}

/* Watermark */
.watermark {
    position: absolute;
    left: 1299px;
    bottom: 8px;
    display: flex;
    align-items: flex-start;
    pointer-events: none;
}
.wm-text {
    margin: -1px 0 0 -3px;
}
.wm-name {
    font: bold 21px/24px "Noto Sans CJK SC", sans-serif;
    color: #4f8fd0;
    white-space: nowrap;
}
.wm-url {
    font: 17px/20px "Open Sans", sans-serif;
    color: #62c46f;
    opacity: .85;
    white-space: nowrap;
}
```
